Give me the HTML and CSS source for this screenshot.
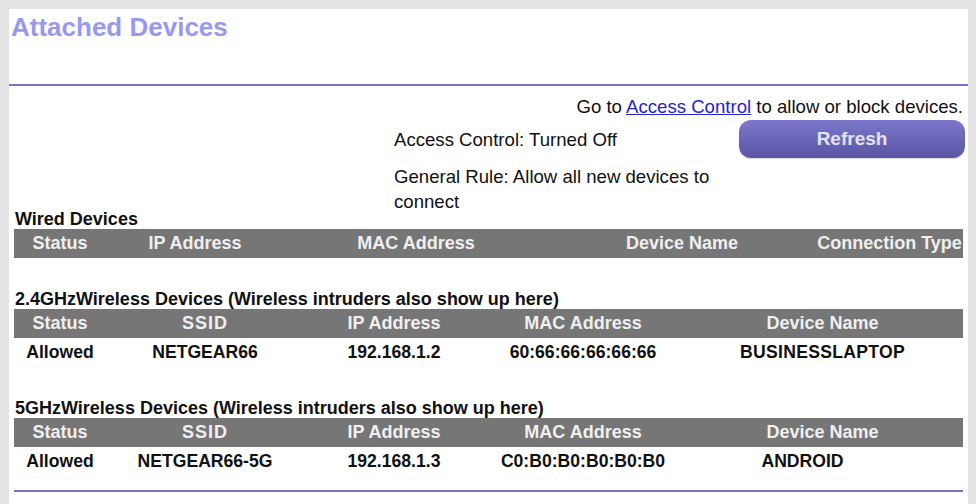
FILE: index.html
```html
<!DOCTYPE html>
<html>
<head>
<meta charset="utf-8">
<title>Attached Devices</title>
<link rel="stylesheet" href="styles.css">
</head>
<body>
<div class="frame">
  <div class="page-head">
    <h1 class="page-title">Attached Devices</h1>
  </div>
  <div class="head-rule"></div>

  <div class="goto">Go to <a class="link" href="#">Access Control</a> to allow or block devices.</div>

  <div class="status-row">
    <div class="status-text">
      <div class="ac-state">Access Control: Turned Off</div>
      <div class="ac-rule">General Rule: Allow all new devices to connect</div>
    </div>
    <button class="refresh" type="button">Refresh</button>
  </div>

  <div class="section-title">Wired Devices</div>
  <div class="grid wired">
    <div class="cell head">Status</div>
    <div class="cell head">IP Address</div>
    <div class="cell head">MAC Address</div>
    <div class="cell head">Device Name</div>
    <div class="cell head">Connection Type</div>
  </div>

  <div class="section-title gap">2.4GHzWireless Devices (Wireless intruders also show up here)</div>
  <div class="grid wireless">
    <div class="cell head">Status</div>
    <div class="cell head ssid">SSID</div>
    <div class="cell head">IP Address</div>
    <div class="cell head">MAC Address</div>
    <div class="cell head">Device Name</div>
    <div class="cell">Allowed</div>
    <div class="cell">NETGEAR66</div>
    <div class="cell">192.168.1.2</div>
    <div class="cell">60:66:66:66:66:66</div>
    <div class="cell spaced">BUSINESSLAPTOP</div>
  </div>

  <div class="section-title gap">5GHzWireless Devices (Wireless intruders also show up here)</div>
  <div class="grid wireless">
    <div class="cell head">Status</div>
    <div class="cell head ssid">SSID</div>
    <div class="cell head">IP Address</div>
    <div class="cell head">MAC Address</div>
    <div class="cell head">Device Name</div>
    <div class="cell">Allowed</div>
    <div class="cell">NETGEAR66-5G</div>
    <div class="cell">192.168.1.3</div>
    <div class="cell">C0:B0:B0:B0:B0:B0</div>
    <div class="cell name-short">ANDROID</div>
  </div>

  <div class="foot-rule"></div>
</div>
</body>
</html>
```
FILE: styles.css
```css
html, body {
  margin: 0;
  padding: 0;
}

body {
  background: #e4e4e4;
  font-family: "Liberation Sans", Arial, sans-serif;
  color: #111;
  overflow: hidden;
}

.frame {
  margin: 9px 0 0 9px;
  width: 959px;
  height: 495px;
  background: #fff;
}

.page-head {
  height: 75px;
  padding-left: 2px;
  box-sizing: border-box;
  padding-top: 3px;
}

.page-title {
  margin: 0;
  font-size: 26px;
  line-height: 30px;
  font-weight: bold;
  color: #9898ef;
}

.head-rule {
  height: 2px;
  background: #7470d6;
}

.goto {
  margin-top: 10px;
  padding-right: 5px;
  text-align: right;
  font-size: 18.6px;
  line-height: 22px;
}

.link {
  color: #2323d2;
  text-decoration: underline;
}

.status-row {
  margin-top: 2px;
  height: 89px;
  display: flex;
  align-items: flex-start;
  padding-left: 385px;
}

.status-text {
  width: 330px;
  font-size: 18.6px;
  line-height: 25px;
}

.ac-state {
  margin-top: 7px;
}

.ac-rule {
  margin-top: 12px;
}

.refresh {
  margin-left: 15px;
  width: 226px;
  height: 38px;
  border: none;
  border-radius: 12px;
  background: linear-gradient(#7d77cc, #5b55a3);
  color: #e2e2f4;
  font-family: "Liberation Sans", Arial, sans-serif;
  font-size: 19px;
  font-weight: bold;
  line-height: 38px;
  padding: 0;
  box-shadow: 0 1px 1px rgba(0, 0, 0, 0.15);
}

.section-title {
  padding-left: 6px;
  font-size: 18px;
  line-height: 20px;
  font-weight: bold;
  color: #111;
}

.section-title.gap {
  margin-top: 31px;
}

.grid {
  display: grid;
  margin: 0 5px;
  width: 949px;
}

.grid.wired {
  grid-template-columns: 92px 178px 264px 268px 147px;
}

.grid.wireless {
  grid-template-columns: 92px 198px 180px 198px 281px;
}

.cell {
  height: 29px;
  line-height: 29px;
  text-align: center;
  font-size: 17.6px;
  font-weight: bold;
  white-space: nowrap;
  color: #111;
}

.cell.head {
  background: #767676;
  color: #f0f0f0;
  font-size: 18px;
}

.cell.ssid {
  letter-spacing: 1px;
}

.cell.spaced {
  letter-spacing: 0.3px;
}

.cell.name-short {
  padding-right: 40px;
}

.foot-rule {
  margin: 14px 5px 0;
  height: 2px;
  background: #7470d6;
}
```
